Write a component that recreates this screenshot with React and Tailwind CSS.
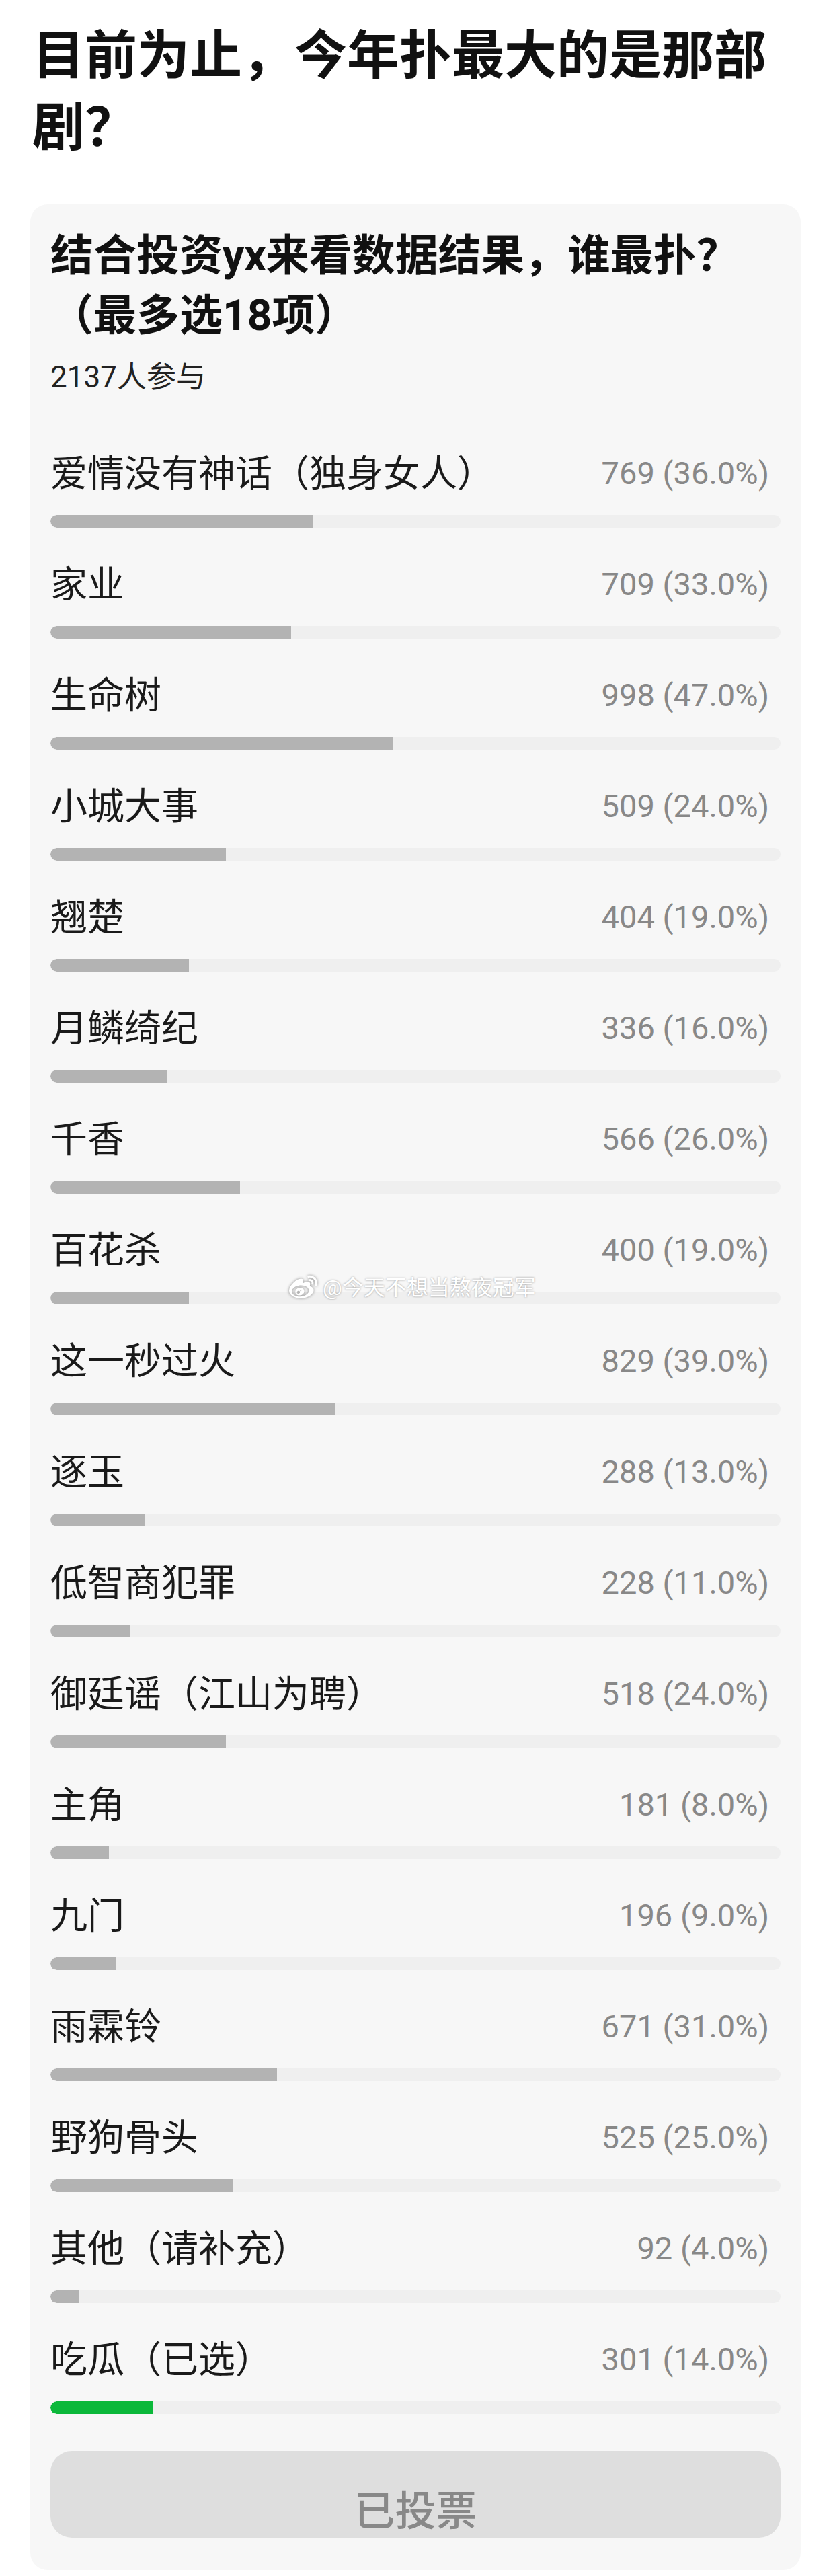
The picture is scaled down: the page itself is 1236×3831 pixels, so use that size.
import { FaWeibo } from 'react-icons/fa'

const OPTIONS = [
  { label: '爱情没有神话（独身女人）', votes: 769, pct: 36.0 },
  { label: '家业', votes: 709, pct: 33.0 },
  { label: '生命树', votes: 998, pct: 47.0 },
  { label: '小城大事', votes: 509, pct: 24.0 },
  { label: '翘楚', votes: 404, pct: 19.0 },
  { label: '月鳞绮纪', votes: 336, pct: 16.0 },
  { label: '千香', votes: 566, pct: 26.0 },
  { label: '百花杀', votes: 400, pct: 19.0 },
  { label: '这一秒过火', votes: 829, pct: 39.0 },
  { label: '逐玉', votes: 288, pct: 13.0 },
  { label: '低智商犯罪', votes: 228, pct: 11.0 },
  { label: '御廷谣（江山为聘）', votes: 518, pct: 24.0 },
  { label: '主角', votes: 181, pct: 8.0 },
  { label: '九门', votes: 196, pct: 9.0 },
  { label: '雨霖铃', votes: 671, pct: 31.0 },
  { label: '野狗骨头', votes: 525, pct: 25.0 },
  { label: '其他（请补充）', votes: 92, pct: 4.0 },
  { label: '吃瓜（已选）', votes: 301, pct: 14.0, mine: true },
]

function OptionRow({ label, votes, pct, mine }) {
  return (
    <div className="flex flex-col">
      <div className="flex items-center justify-between h-[70px]">
        <span className="text-[55px] leading-[70px] text-[#1a1a1a]">{label}</span>
        <span className="text-[47px] leading-[70px] text-[#888888] pr-[17px]">
          {votes} ({pct.toFixed(1)}%)
        </span>
      </div>
      <div className="mt-[27px] h-[19px] rounded-[10px] bg-[#efefef] overflow-hidden">
        <div
          className={`h-full rounded-l-[10px] ${mine ? 'bg-[#0bb83a]' : 'bg-[#b3b3b3]'}`}
          style={{ width: `${pct}%` }}
        />
      </div>
    </div>
  )
}

export default function App() {
  return (
    <div className="relative w-[1236px] min-h-[3831px] bg-white font-[Roboto,'Noto_Sans_CJK_SC',sans-serif]">
      <h1 className="pl-[48px] pt-[30px] text-[78px] leading-[107px] font-bold text-[#111111]">
        目前为止，今年扑最大的是那部
        <br />
        剧？
      </h1>

      <div className="mx-[45px] mt-[60px] rounded-[26px] bg-[#f7f7f7] px-[30px] pt-[32px] pb-[48px]">
        <h2 className="text-[64px] leading-[89px] font-bold text-[#111111]">
          结合投资yx来看数据结果，谁最扑？
          <br />
          （最多选18项）
        </h2>
        <p className="mt-[23px] text-[44px] leading-[48px] text-[#222222]">2137人参与</p>

        <div className="mt-[84px] flex flex-col gap-[49px]">
          {OPTIONS.map(o => (
            <OptionRow key={o.label} {...o} />
          ))}
        </div>

        <button className="mt-[55px] w-full h-[129px] rounded-[32px] bg-[#dedede] flex justify-center pt-[60px]">
          <span className="text-[61px] leading-[61px] font-medium text-[#888888]">已投票</span>
        </button>
      </div>

      {/* watermark */}
      <div className="absolute left-[430px] top-[1894px] flex items-center gap-[8px]">
        <FaWeibo className="w-[42px] h-[42px] text-white drop-shadow-[0_0_2px_rgba(0,0,0,0.45)]" />
        <span className="text-[32px] leading-[40px] text-white [text-shadow:0_0_3px_rgba(0,0,0,0.4)]">
          @今天不想当熬夜冠军
        </span>
      </div>
    </div>
  )
}
